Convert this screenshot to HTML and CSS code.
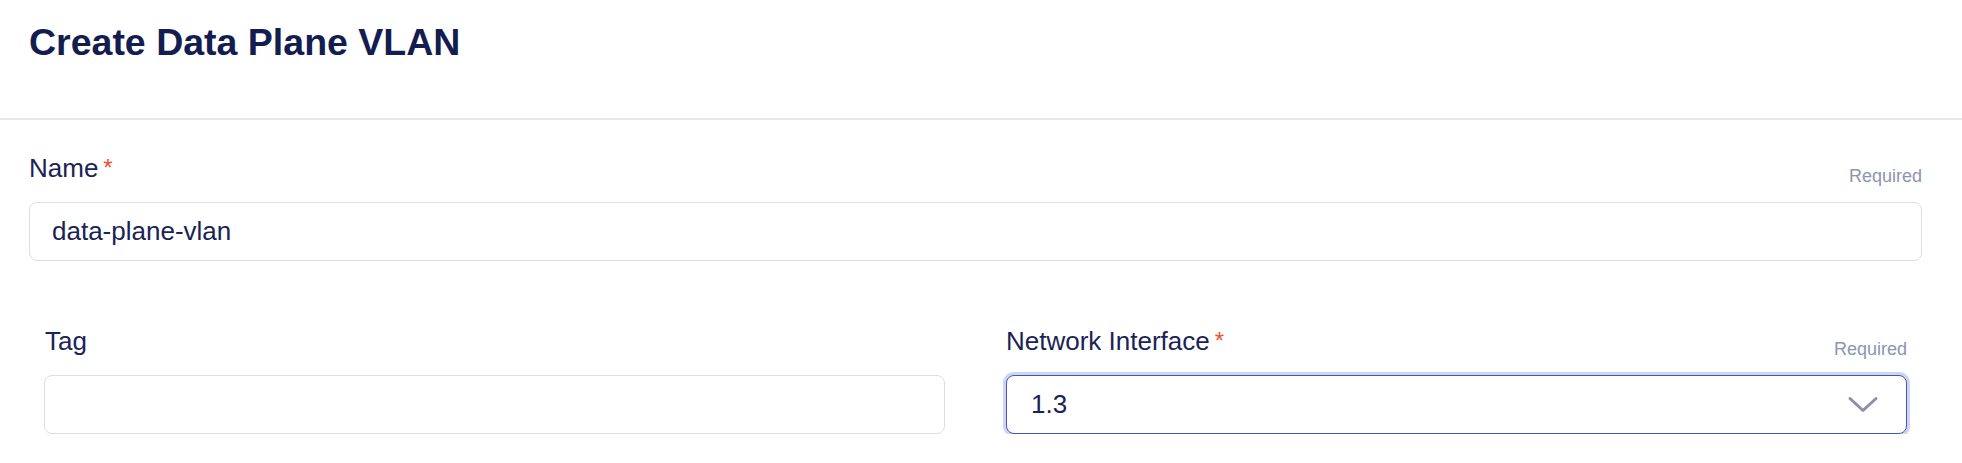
FILE: index.html
```html
<!DOCTYPE html>
<html lang="en">
<head>
<meta charset="utf-8">
<title>Create Data Plane VLAN</title>
<link rel="stylesheet" href="styles.css">
</head>
<body>
  <header class="header">
    <h1 class="title">Create Data Plane VLAN</h1>
  </header>
  <main class="form">
    <div class="field">
      <div class="label-row">
        <label class="label">Name<span class="star">*</span></label>
        <span class="hint">Required</span>
      </div>
      <div class="input">data-plane-vlan</div>
    </div>
    <div class="grid">
      <div class="field">
        <div class="label-row">
          <label class="label label-tag">Tag</label>
        </div>
        <div class="input"></div>
      </div>
      <div class="field">
        <div class="label-row">
          <label class="label">Network Interface<span class="star">*</span></label>
          <span class="hint">Required</span>
        </div>
        <div class="input select">
          <span>1.3</span>
          <svg class="chevron" width="32" height="18" viewBox="0 0 32 18" aria-hidden="true">
            <path d="M3 2.5 L16 14.5 L29 2.5" fill="none" stroke="#8b90a7" stroke-width="3" stroke-linecap="round" stroke-linejoin="round"/>
          </svg>
        </div>
      </div>
    </div>
  </main>
</body>
</html>
```

FILE: styles.css
```css
* { box-sizing: border-box; }

body {
  margin: 0;
  background: #ffffff;
  font-family: "Liberation Sans", Arial, sans-serif;
  color: #1a2356;
}

.header {
  height: 120px;
  padding: 20.5px 40px 0 29px;
  border-bottom: 2px solid #e4e7f2;
}

.title {
  margin: 0;
  font-size: 37.5px;
  line-height: 42px;
  font-weight: 700;
  color: #131d50;
}

.form {
  padding: 33px 40px 0 29px;
}

.label-row {
  display: flex;
  justify-content: space-between;
  align-items: flex-end;
  height: 34px;
  margin-bottom: 15px;
}

.label {
  font-size: 26px;
  line-height: 30px;
  margin-bottom: 4px;
  color: #1a2356;
}

.label-tag {
  padding-left: 1px;
}

.star {
  color: #f0502e;
  font-size: 24px;
  margin-left: 5px;
  vertical-align: 1px;
}

.hint {
  font-size: 18px;
  line-height: 22px;
  color: #8d94b0;
}

.input {
  height: 59px;
  border: 1px solid #dcdde6;
  border-radius: 8px;
  padding: 0 22px;
  display: flex;
  align-items: center;
  font-size: 26px;
  color: #1a2356;
  background: #fff;
}

.grid {
  display: grid;
  grid-template-columns: 1fr 1fr;
  column-gap: 61px;
  padding: 0 15px;
  margin-top: 65px;
}

.select {
  justify-content: space-between;
  padding: 0 27px 0 24px;
  border-color: #4455b8;
  box-shadow: 0 0 0 3px #cfd4f0;
}

.chevron {
  display: block;
}
```
